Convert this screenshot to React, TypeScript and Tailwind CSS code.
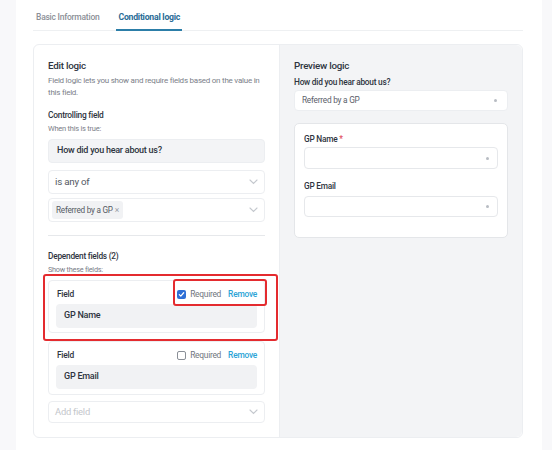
import React from "react";

const font = { fontFamily: "Roboto, 'Noto Sans', sans-serif", letterSpacing: "-0.015em" };

function Chevron() {
  return (
    <svg width="9" height="6" viewBox="0 0 9 6">
      <path d="M1 1l3.5 3.5L8 1" fill="none" stroke="#c4c8ce" strokeWidth="1.1" strokeLinecap="round" />
    </svg>
  );
}

function Caret() {
  return <span className="block h-[3px] w-[3px] rounded-full bg-[#b8bcc3]" />;
}

function Checkbox({ checked }: { checked: boolean }) {
  if (checked) {
    return (
      <span className="flex h-[9px] w-[9px] items-center justify-center rounded-[2px] bg-[#2f6fd6]">
        <svg width="7" height="7" viewBox="0 0 8 8">
          <path d="M1.5 4.2l1.7 1.6L6.5 2" fill="none" stroke="#fff" strokeWidth="1.4" strokeLinecap="round" strokeLinejoin="round" />
        </svg>
      </span>
    );
  }
  return <span className="block h-[9px] w-[9px] rounded-[2px] border border-[#8a8f97] bg-white" />;
}

function FieldCard({ name, required, h }: { name: string; required: boolean; h: string }) {
  return (
    <div className={`${h} rounded-[4px] border border-[#eceef1] bg-white px-[7px] pt-[7px]`}>
      <div className="flex h-[13px] items-center justify-between pl-[1px]">
        <span className="text-[8.4px] font-medium text-[#2e3440]">Field</span>
        <div className="flex items-center">
          <Checkbox checked={required} />
          <span className="ml-[4px] text-[8.4px] tracking-[-0.03em] text-[#70757e]">Required</span>
          <span className="ml-[7px] text-[8.4px] font-medium text-[#2aa3d6]">Remove</span>
        </div>
      </div>
      <div className="mt-[3px] flex h-[24px] items-center rounded-[4px] bg-[#f1f2f4] px-[8px] text-[9px] font-medium text-[#2e3440]">
        {name}
      </div>
    </div>
  );
}

export default function App() {
  return (
    <div style={font} className="flex h-[450px] w-[552px] bg-[#f8f8fa]">
      <div className="w-[16px]" />
      <div className="w-[526px] bg-white pl-[17px] pr-[19px]">
        {/* tabs */}
        <div className="flex h-[31px] items-end border-b border-[#eef0f2] pl-[2px]">
          <div className="pb-[6px] pl-[1px] pr-[17px] text-[8.5px] font-medium text-[#8c9097]">Basic Information</div>
          <div className="-mb-px border-b-2 border-[#2c7ea8] px-[2px] pb-[5px] text-[8.7px] font-bold text-[#2a6c96]">
            Conditional logic
          </div>
        </div>

        {/* logic card */}
        <div className="mt-[13px] flex h-[394px] rounded-[6px] border border-[#eceef1]">
          <div className="w-[246px] border-r border-[#eceef1] px-[14px] pt-[15px]">
            <div className="h-[12px] text-[9.8px] font-medium leading-[12px] text-[#2e3440]">Edit logic</div>
            <p className="mt-[3px] whitespace-nowrap text-[8px] leading-[12px] text-[#7b8089]">
              Field logic lets you show and require fields based on the value in
              <br />
              this field.
            </p>
            <div className="mt-[10px] h-[12px] text-[8.4px] font-medium leading-[12px] text-[#2e3440]">Controlling field</div>
            <div className="mt-[2px] h-[12px] text-[7.5px] leading-[12px] text-[#7b8089]">When this is true:</div>
            <div className="mt-[4px] flex h-[24px] items-center rounded-[4px] border border-[#eceef1] bg-[#f3f4f6] px-[8px] text-[9px] font-medium text-[#2e3440]">
              How did you hear about us?
            </div>
            <div className="mt-[7px] flex h-[24px] items-center justify-between rounded-[4px] border border-[#eceef1] bg-white px-[6px] text-[9.8px] text-[#545964]">
              <span>is any of</span>
              <Chevron />
            </div>
            <div className="mt-[4px] flex h-[24px] items-center justify-between rounded-[4px] border border-[#eceef1] bg-white pl-[3px] pr-[6px]">
              <span className="flex h-[18px] items-center rounded-[3px] bg-[#f1f2f4] px-[4px] text-[8.2px] text-[#555a63]">
                Referred by a GP <span className="ml-[2px] text-[8.4px] text-[#9aa0a8]">×</span>
              </span>
              <Chevron />
            </div>
            <div className="mt-[13px] border-t border-[#e6e8eb]" />
            <div className="mt-[14px] h-[12px] text-[8.3px] font-medium leading-[12px] text-[#2e3440]">Dependent fields (2)</div>
            <div className="mt-[2px] h-[12px] text-[7.3px] leading-[12px] text-[#7b8089]">Show these fields:</div>
            <div className="relative mt-[4px]">
              <div className="pointer-events-none absolute -left-[5px] -top-[6px] h-[67px] w-[235px] rounded-[3px] border-2 border-[#e42b2f]" />
              <div className="pointer-events-none absolute left-[125px] -top-[1px] h-[27px] w-[94px] rounded-[3px] border-2 border-[#e42b2f]" />
              <FieldCard name="GP Name" required h="h-[53px]" />
            </div>
            <div className="mt-[8px]">
              <FieldCard name="GP Email" required={false} h="h-[54px]" />
            </div>
            <div className="mt-[6px] flex h-[22px] items-center justify-between rounded-[4px] border border-[#eceef1] bg-white px-[6px] text-[9.4px] text-[#c3c6cb]">
              <span>Add field</span>
              <Chevron />
            </div>
          </div>

          <div className="flex-1 rounded-r-[6px] bg-[#f3f4f6] px-[14px] pt-[15px]">
            <div className="h-[12px] text-[9.8px] font-medium leading-[12px] text-[#2e3440]">Preview logic</div>
            <div className="mt-[4px] h-[12px] text-[8.3px] font-medium leading-[12px] text-[#2e3440]">How did you hear about us?</div>
            <div className="mt-[2px] flex h-[21px] items-center justify-between rounded-[4px] border border-[#eceef1] bg-white pl-[7px] pr-[10px] text-[8.3px] text-[#5b606a]">
              <span>Referred by a GP</span>
              <Caret />
            </div>
            <div className="mt-[12px] h-[115px] rounded-[5px] border border-[#e4e6e9] bg-white px-[9px] pt-[9px]">
              <div className="h-[12px] text-[8.3px] font-medium leading-[12px] text-[#2e3440]">
                GP Name <span className="text-[#e04a5a]">*</span>
              </div>
              <div className="mt-[2px] flex h-[22px] items-center justify-end rounded-[4px] border border-[#e6e8eb] bg-white pr-[8px]">
                <Caret />
              </div>
              <div className="mt-[11px] h-[12px] text-[8.3px] font-medium leading-[12px] text-[#2e3440]">GP Email</div>
              <div className="mt-[4px] flex h-[21px] items-center justify-end rounded-[4px] border border-[#e6e8eb] bg-white pr-[8px]">
                <Caret />
              </div>
            </div>
          </div>
        </div>
      </div>
      <div className="w-[10px]" />
    </div>
  );
}
